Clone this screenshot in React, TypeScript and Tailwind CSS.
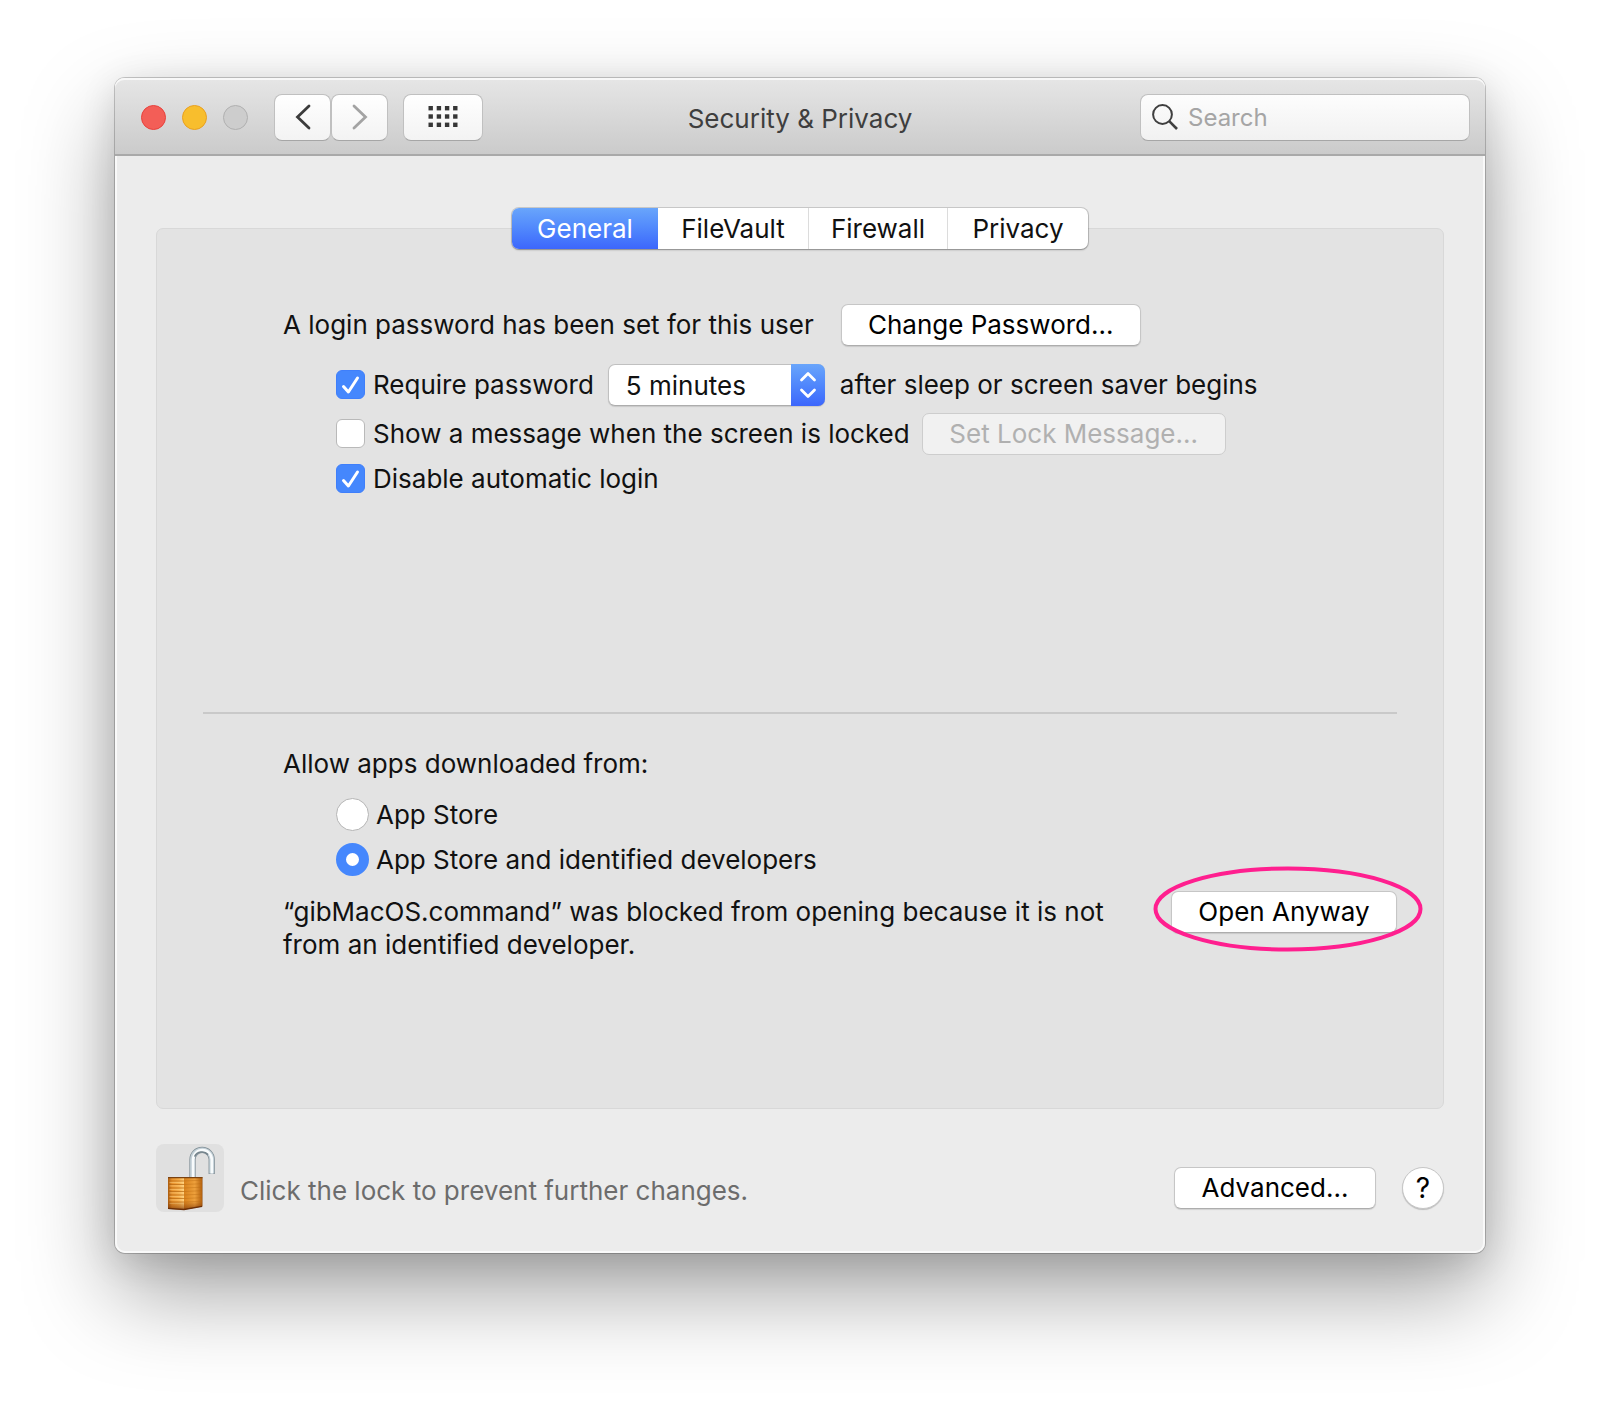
import { useState } from 'react';
import type { ReactNode } from 'react';
import clsx from 'clsx';

const TABS = ['General', 'FileVault', 'Firewall', 'Privacy'];

const TAB_WIDTHS: Record<string, string> = {
  General: 'w-[146px]',
  FileVault: 'w-[151px]',
  Firewall: 'w-[139px]',
  Privacy: 'w-[140px]',
};

const SOURCES = [
  { id: 'store', label: 'App Store' },
  { id: 'identified', label: 'App Store and identified developers' },
];

interface PushButtonProps {
  children: ReactNode;
  className?: string;
  disabled?: boolean;
}

function PushButton({ children, className, disabled }: PushButtonProps) {
  return (
    <button
      type="button"
      disabled={disabled}
      className={clsx(
        'h-[42px] shrink-0 rounded-[7px] border text-[26px] leading-8 whitespace-nowrap',
        disabled
          ? 'border-[#cdcdcd] bg-[#f1f1f1] text-[#b0b0b0]'
          : 'border-[#c6c6c6] border-b-[#adadad] bg-white text-black shadow-[0_1px_1px_rgba(0,0,0,0.12)]',
        className
      )}
    >
      {children}
    </button>
  );
}

interface CheckboxProps {
  id: string;
  label: string;
  defaultChecked?: boolean;
}

function Checkbox({ id, label, defaultChecked }: CheckboxProps) {
  return (
    <div className="flex items-center gap-2 pb-0.5">
      <span className="grid size-[29px] shrink-0">
        <input
          id={id}
          type="checkbox"
          defaultChecked={defaultChecked}
          className="peer col-start-1 row-start-1 size-[29px] appearance-none rounded-[6px] border border-[#b9b9b9] bg-white checked:border-[#3f7ffb] checked:bg-[#4587fd]"
        />
        <svg
          viewBox="0 0 29 29"
          className="pointer-events-none invisible col-start-1 row-start-1 size-[29px] peer-checked:visible"
          fill="none"
          stroke="white"
          strokeWidth="3"
          strokeLinecap="round"
          strokeLinejoin="round"
        >
          <path d="M7.5 16.5 L12.4 22 L21.5 8" />
        </svg>
      </span>
      <label htmlFor={id} className="whitespace-nowrap">
        {label}
      </label>
    </div>
  );
}

function TitleBar() {
  const toolButton =
    'flex h-[47px] items-center justify-center rounded-[8px] border border-[#c0c0c0] border-b-[#a6a6a6] bg-linear-to-b from-white to-[#f3f3f3]';

  return (
    <header className="grid h-[78px] grid-cols-[1fr_auto_1fr] items-center rounded-t-[9px] border-b-2 border-[#a9a9a9] bg-linear-to-b from-[#e6e6e6] to-[#cbcbcb] pt-0.5 shadow-[inset_0_2px_0_#f8f8f8]">
      <div className="flex items-center pl-[26px]">
        <div className="flex gap-4">
          <button type="button" aria-label="Close" className="size-[25px] rounded-full border border-[#e8413c] bg-[#f35e57]" />
          <button type="button" aria-label="Minimize" className="size-[25px] rounded-full border border-[#e9a01f] bg-[#f8be2d]" />
          <button type="button" aria-label="Zoom" disabled className="size-[25px] rounded-full border border-[#b0b0b0] bg-[#cdcdcd]" />
        </div>

        <button type="button" aria-label="Back" className={clsx(toolButton, 'ml-[26px] w-[57px]')}>
          <svg viewBox="0 0 16 26" className="h-[26px] w-4" fill="none" stroke="#3c3c3c" strokeWidth="2.8" strokeLinecap="round">
            <path d="M14 2 L2.5 13 L14 24" />
          </svg>
        </button>
        <button type="button" aria-label="Forward" disabled className={clsx(toolButton, 'w-[57px]')}>
          <svg viewBox="0 0 16 26" className="h-[26px] w-4" fill="none" stroke="#a3a3a3" strokeWidth="2.8" strokeLinecap="round">
            <path d="M2 2 L13.5 13 L2 24" />
          </svg>
        </button>
        <button type="button" aria-label="Show All" className={clsx(toolButton, 'ml-[15px] w-[80px]')}>
          <svg viewBox="0 0 30 22" className="h-[22px] w-[30px]" fill="#363636">
            {[0, 8.3, 16.6].map((y) =>
              [0.5, 8.7, 16.9, 25.1].map((x) => <rect key={`${x}-${y}`} x={x} y={y} width="4.4" height="4.4" />)
            )}
          </svg>
        </button>
      </div>

      <h1 className="pt-0.5 text-[26px] text-[#3e3e3e]">Security &amp; Privacy</h1>

      <div className="justify-self-end pr-[15px]">
        <div className="flex h-[47px] w-[330px] items-center gap-[10px] rounded-[8px] border border-[#c0c0c0] border-b-[#a6a6a6] bg-linear-to-b from-[#fdfdfd] to-[#f1f1f1] px-[11px]">
          <svg viewBox="0 0 26 26" className="size-[26px] shrink-0" fill="none" stroke="#3f3f3f" strokeWidth="2">
            <circle cx="10.5" cy="10.5" r="9.4" />
            <path d="M17.2 17.2 L25 25" strokeWidth="2.6" />
          </svg>
          <input
            type="search"
            aria-label="Search"
            placeholder="Search"
            className="min-w-0 flex-1 bg-transparent text-[24px] text-[#3e3e3e] outline-none placeholder:text-[#a5a5a5]"
          />
        </div>
      </div>
    </header>
  );
}

function LockIcon() {
  return (
    <svg viewBox="0 0 68 68" className="size-[68px]">
      <defs>
        <linearGradient id="brassLeft" x1="0" x2="1">
          <stop offset="0" stopColor="#a85a10" />
          <stop offset="0.25" stopColor="#e8922c" />
          <stop offset="0.7" stopColor="#f6ad48" />
          <stop offset="1" stopColor="#ffd07c" />
        </linearGradient>
        <linearGradient id="brassRight" x1="0" x2="1">
          <stop offset="0" stopColor="#d9821c" />
          <stop offset="0.6" stopColor="#eda03c" />
          <stop offset="1" stopColor="#b5620e" />
        </linearGradient>
        <linearGradient id="brassShade" x1="0" x2="0" y1="0" y2="1">
          <stop offset="0.75" stopColor="#7a3506" stopOpacity="0" />
          <stop offset="1" stopColor="#7a3506" stopOpacity="0.65" />
        </linearGradient>
      </defs>
      {/* shackle */}
      <path d="M36.5 34 V15.5 A9.6 9.6 0 0 1 55.7 15.5 V30" fill="none" stroke="#7d8b93" strokeWidth="6.2" />
      <path d="M36.5 34 V15.5 A9.6 9.6 0 0 1 55.7 15.5 V29.4" fill="none" stroke="#c3d0d7" strokeWidth="4.8" />
      <path d="M37.1 33 V15.5 A9.3 9.3 0 0 1 55.8 15.5 V29.4" fill="none" stroke="#f8fbfc" strokeWidth="2.6" />
      <path d="M38.6 12.6 A8.2 8.2 0 0 1 52 10.6" fill="none" stroke="#74838b" strokeWidth="1.6" />
      {/* body */}
      <path d="M12 33 H46.5 V62.5 L28 65.8 L12 65 Z" fill="#8f4a0c" />
      <path d="M12 33.8 H28 V65.2 L12 64.2 Z" fill="url(#brassLeft)" />
      <path d="M28 33.8 H46 V62.2 L28 65.2 Z" fill="url(#brassRight)" />
      {[37, 40.5, 44, 47.5, 51, 54.5, 58].map((y) => (
        <g key={y} fill="none" strokeWidth="0.9">
          <path d={`M12 ${y} H28`} stroke="#b3640f" strokeOpacity="0.75" />
          <path d={`M28 ${y} L46 ${y - 0.8}`} stroke="#b3640f" strokeOpacity="0.4" />
          <path d={`M13.5 ${y + 1.4} H28`} stroke="#ffd88c" strokeOpacity="0.55" />
        </g>
      ))}
      <path d="M12 33.8 H46 V62.2 L28 65.2 L12 64.2 Z" fill="url(#brassShade)" />
      <path d="M12 33.6 H46.4" stroke="#7b4210" strokeWidth="1.3" />
      <path d="M12 64.4 L28 65.5 L46 62.3" fill="none" stroke="#6a2f08" strokeWidth="1.3" />
    </svg>
  );
}

export default function App() {
  const [tab, setTab] = useState('General');
  const [source, setSource] = useState('identified');

  return (
    <div className="bg-white px-[115px] pt-[78px] pb-[152px] font-[Inter,'Liberation_Sans',sans-serif] text-[26px] leading-[33px] text-[#111]">
      <main className="rounded-[10px] bg-[#ececec] shadow-[inset_0_0_0_2px_#f9f9f9,0_0_0_1px_rgba(0,0,0,0.2),0_40px_90px_rgba(0,0,0,0.36),0_8px_36px_rgba(0,0,0,0.12)]">
        <TitleBar />

        <div className="px-[41px] pt-[52px] pb-[41px]">
          {/* Tabs sit on the top edge of the panel */}
          <div className="relative z-10 -mb-[21px] flex justify-center">
            <div role="tablist" className="flex h-[41px] rounded-[7px] bg-white shadow-[0_0_0_1px_rgba(0,0,0,0.14),0_1px_2px_rgba(0,0,0,0.3)]">
              {TABS.map((name) => (
                <button
                  key={name}
                  type="button"
                  role="tab"
                  aria-selected={tab === name}
                  onClick={() => setTab(name)}
                  className={clsx(
                    'first:rounded-l-[7px] last:rounded-r-[7px]',
                    TAB_WIDTHS[name],
                    tab === name
                      ? 'bg-linear-to-b from-[#69a5fb] to-[#3d66fc] text-white'
                      : 'border-r border-[#dcdcdc] last:border-r-0'
                  )}
                >
                  {name}
                </button>
              ))}
            </div>
          </div>

          <section className="rounded-[7px] border border-[#d8d8d8] bg-[#e3e3e3] px-[46px] pt-[75px] pb-[147px]">
            <div className="pl-20">
              <div className="flex items-center gap-[27px]">
                <p className="pb-0.5 whitespace-nowrap">A login password has been set for this user</p>
                <PushButton className="w-[300px]">Change Password...</PushButton>
              </div>

              <div className="pl-[53px]">
                <div className="mt-[18px] flex items-center">
                  <Checkbox id="require-password" label="Require password" defaultChecked />
                  <span className="relative ml-[14px]">
                    <select
                      aria-label="Password delay"
                      defaultValue="5 minutes"
                      className="h-[42px] w-[217px] appearance-none rounded-[7px] border border-[#c0c0c0] border-b-[#adadad] bg-white pl-[17px] shadow-[0_1px_1px_rgba(0,0,0,0.12)]"
                    >
                      <option>immediately</option>
                      <option>5 seconds</option>
                      <option>1 minute</option>
                      <option>5 minutes</option>
                      <option>15 minutes</option>
                      <option>1 hour</option>
                    </select>
                    <span className="pointer-events-none absolute inset-y-0 right-0 flex w-[34px] items-center justify-center rounded-r-[7px] bg-linear-to-b from-[#69a5fb] to-[#3d66fc]">
                      <svg viewBox="0 0 18 28" className="h-7 w-[18px]" fill="none" stroke="white" strokeWidth="2.8" strokeLinecap="round" strokeLinejoin="round">
                        <path d="M2.5 9 L9 2.5 L15.5 9 M2.5 19 L9 25.5 L15.5 19" />
                      </svg>
                    </span>
                  </span>
                  <span className="ml-[15px] pb-0.5 whitespace-nowrap">after sleep or screen saver begins</span>
                </div>

                <div className="mt-[7px] flex items-center gap-3">
                  <Checkbox id="lock-message" label="Show a message when the screen is locked" />
                  <PushButton className="w-[304px]" disabled>
                    Set Lock Message...
                  </PushButton>
                </div>

                <div className="mt-[7px]">
                  <Checkbox id="disable-login" label="Disable automatic login" defaultChecked />
                </div>
              </div>
            </div>

            <hr className="mt-[215px] border-t-2 border-[#c9c9c9]" />

            <div className="pl-20">
              <fieldset className="pt-[33px]">
                <legend className="float-left w-full">Allow apps downloaded from:</legend>
                <div className="clear-both flex flex-col gap-3 pt-[18px] pl-[53px]">
                  {SOURCES.map(({ id, label }) => (
                    <div key={id} className="flex items-center gap-[7px]">
                      <input
                        id={id}
                        type="radio"
                        name="source"
                        checked={source === id}
                        onChange={() => setSource(id)}
                        className="size-[33px] shrink-0 appearance-none rounded-full border border-[#b5b5b5] bg-white checked:border-[10px] checked:border-[#4587fd]"
                      />
                      <label htmlFor={id}>{label}</label>
                    </div>
                  ))}
                </div>
              </fieldset>

              <div className="mt-[15px] flex items-start justify-between">
                <p className="pt-1">
                  “gibMacOS.command” was blocked from opening because it is not
                  <br />
                  from an identified developer.
                </p>
                <div className="relative">
                  <PushButton className="w-[226px]">Open Anyway</PushButton>
                  {/* Hand-drawn highlight around the button */}
                  <svg viewBox="0 0 270 86" className="pointer-events-none absolute -top-[25px] -left-[18px] h-[86px] w-[270px]">
                    <ellipse cx="135" cy="43" rx="132.5" ry="40.5" fill="none" stroke="#ff1f8f" strokeWidth="4" />
                  </svg>
                </div>
              </div>
            </div>
          </section>

          <footer className="mt-[35px] flex items-center">
            <button type="button" aria-label="Lock" className="size-[68px] rounded-[8px] bg-[#e0e0e0]">
              <LockIcon />
            </button>
            <p className="pt-6 pl-4 text-[#6c6c6c]">Click the lock to prevent further changes.</p>
            <div className="ml-auto flex items-center gap-[26px] pt-5">
              <PushButton className="w-[202px]">Advanced...</PushButton>
              <button
                type="button"
                aria-label="Help"
                className="size-[42px] rounded-full border border-[#c6c6c6] bg-white text-[28px] text-black shadow-[0_1px_1px_rgba(0,0,0,0.2)]"
              >
                ?
              </button>
            </div>
          </footer>
        </div>
      </main>
    </div>
  );
}
